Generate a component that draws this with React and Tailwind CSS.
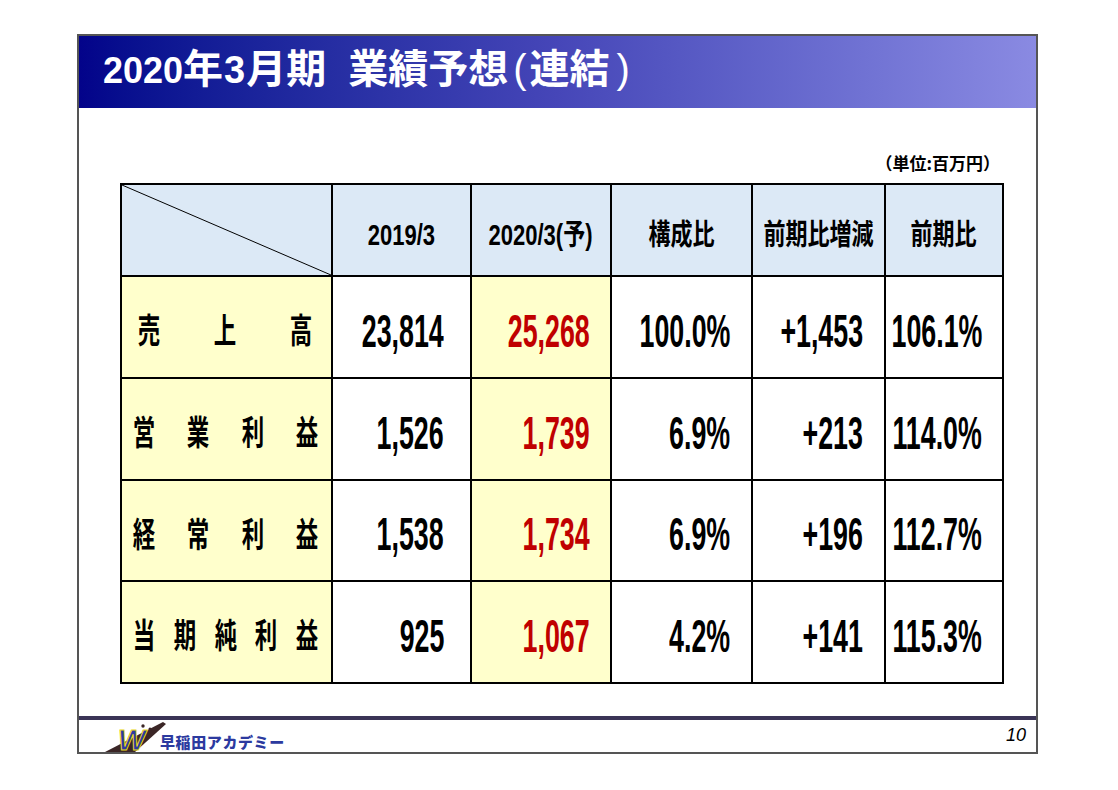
import React from 'react'

const rows = [
  { label: ['売', '上', '高'], pad: 'pl-[16px] pr-[19px]', prev: '23,814', plan: '25,268', ratio: '100.0%', diff: '+1,453', yoy: '106.1%', h: 'h-[102px]' },
  { label: ['営', '業', '利', '益'], pad: 'pl-[11px] pr-[13px]', prev: '1,526', plan: '1,739', ratio: '6.9%', diff: '+213', yoy: '114.0%', h: 'h-[102px]' },
  { label: ['経', '常', '利', '益'], pad: 'pl-[11px] pr-[13px]', prev: '1,538', plan: '1,734', ratio: '6.9%', diff: '+196', yoy: '112.7%', h: 'h-[101px]' },
  { label: ['当', '期', '純', '利', '益'], pad: 'pl-[11px] pr-[13px]', prev: '925', plan: '1,067', ratio: '4.2%', diff: '+141', yoy: '115.3%', h: 'h-[102px]' },
]

const cell = 'border-2 border-black align-middle'

// narrow bold figures, squeezed from the right edge
const Num = ({ children, red }) => (
  <div className="flex justify-end">
    <span
      className={`inline-block shrink-0 origin-right scale-x-[0.57] font-['Liberation_Sans',sans-serif] text-[47px] leading-none font-bold whitespace-nowrap ${red ? 'text-[#c00000]' : 'text-black'}`}
    >
      {children}
    </span>
  </div>
)

const Head = ({ children }) => (
  <div className="flex justify-center">
    <span className="inline-block shrink-0 origin-center scale-x-[0.76] font-['Liberation_Sans','Noto_Sans_CJK_JP',sans-serif] text-[29px] leading-none font-bold whitespace-nowrap">
      {children}
    </span>
  </div>
)

const Logo = () => (
  <div className="flex items-end">
    <svg width="64" height="32" viewBox="0 0 64 32" className="block overflow-visible">
      <polygon points="0,32 58,2 61,4 30,32" fill="#3b2626" />
      <circle cx="38" cy="6" r="1.7" fill="#3b2626" />
      <circle cx="45" cy="9" r="1.5" fill="#3b2626" />
      <text
        x="13"
        y="30"
        fontFamily="Liberation Sans, sans-serif"
        fontWeight="900"
        fontStyle="italic"
        fontSize="29"
        fill="#2c3a9f"
        stroke="#e9d821"
        strokeWidth="1"
      >
        W
      </text>
    </svg>
    <span className="mb-[3px] -ml-[9px] font-['Noto_Sans_CJK_JP',sans-serif] text-[15px] leading-none font-black tracking-[0.6px] text-[#2c3a9f]">
      早稲田アカデミー
    </span>
  </div>
)

export default function App() {
  return (
    <div className="min-h-[790px] w-[1118px] bg-white pt-[34px]">
      <div className="ml-[77px] flex h-[720px] w-[961px] flex-col border-2 border-[#555]">
        {/* title band */}
        <div className="flex h-[72px] items-center bg-linear-to-r from-[#03038a] via-[#4646b8] to-[#8a8ae2] pb-[9px] pl-[24px]">
          <h1 className="flex items-baseline font-['Noto_Sans_CJK_JP',sans-serif] text-[40px] leading-none font-bold text-white">
            <span>
              <span className="font-['Liberation_Sans',sans-serif] text-[36px]">2020</span>年
              <span className="mx-[1px] font-['Liberation_Sans',sans-serif] text-[38px]">3</span>月期
            </span>
            <span className="ml-[22px]">
              業績予想
              <span className="mr-[3px] ml-[5px] font-['Liberation_Sans',sans-serif] font-normal">(</span>
              連結
              <span className="ml-[7px] font-['Liberation_Sans',sans-serif] font-normal">)</span>
            </span>
          </h1>
        </div>

        <div className="mt-[44px] ml-[41px] w-[882px] pr-[2px] text-right font-['Noto_Sans_CJK_JP',sans-serif] text-[17px] leading-[22px] font-bold text-black">
          （単位:百万円）
        </div>

        <table className="mt-[9px] ml-[41px] w-[882px] table-fixed border-collapse border-2 border-black">
          <colgroup>
            <col className="w-[211px]" />
            <col className="w-[139px]" />
            <col className="w-[140px]" />
            <col className="w-[141px]" />
            <col className="w-[133px]" />
            <col className="w-[118px]" />
          </colgroup>
          <thead>
            <tr className="h-[92px] bg-[#dce9f6]">
              <th className={`${cell} relative p-0`}>
                <svg className="absolute inset-0 h-full w-full" viewBox="0 0 100 100" preserveAspectRatio="none">
                  <line x1="0" y1="0" x2="100" y2="100" stroke="#000" strokeWidth="1" vectorEffect="non-scaling-stroke" />
                </svg>
              </th>
              {['2019/3', '2020/3(予)', '構成比', '前期比増減', '前期比'].map((t) => (
                <th key={t} className={`${cell} px-0 pt-[10px] text-center`}>
                  <Head>{t}</Head>
                </th>
              ))}
            </tr>
          </thead>
          <tbody>
            {rows.map((r) => (
              <tr key={r.prev} className={r.h}>
                <td className={`${cell} bg-[#ffffcc] pt-[4px]`}>
                  <div className={`flex justify-between ${r.pad}`}>
                    {r.label.map((c, i) => (
                      <div key={i} className="flex w-[22px] justify-center">
                        <span className="inline-block shrink-0 origin-center scale-x-[0.66] font-['Noto_Sans_CJK_JP',sans-serif] text-[34px] leading-none font-bold text-black">
                          {c}
                        </span>
                      </div>
                    ))}
                  </div>
                </td>
                <td className={`${cell} pt-[6px] pr-[26px] pl-0`}>
                  <Num>{r.prev}</Num>
                </td>
                <td className={`${cell} bg-[#ffffcc] pt-[6px] pr-[20px] pl-0`}>
                  <Num red>{r.plan}</Num>
                </td>
                <td className={`${cell} pt-[6px] pr-[21px] pl-0`}>
                  <Num>{r.ratio}</Num>
                </td>
                <td className={`${cell} pt-[6px] pr-[21px] pl-0`}>
                  <Num>{r.diff}</Num>
                </td>
                <td className={`${cell} pt-[6px] pr-[20px] pl-0`}>
                  <Num>{r.yoy}</Num>
                </td>
              </tr>
            ))}
          </tbody>
        </table>

        <div className="mt-[32px] h-[4px] bg-[#3a3456]" />

        <div className="flex flex-1 items-end justify-between pl-[26px] pr-[10px]">
          <Logo />
          <span className="mb-[8px] font-['Liberation_Sans',sans-serif] text-[18px] leading-none italic text-black">10</span>
        </div>
      </div>
    </div>
  )
}
